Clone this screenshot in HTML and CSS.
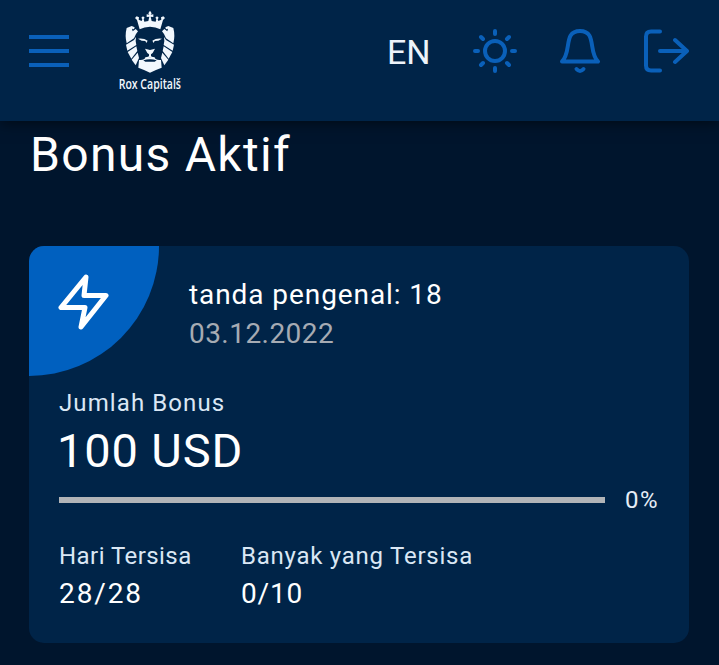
FILE: index.html
```html
<!DOCTYPE html>
<html lang="id">
<head>
<meta charset="utf-8">
<title>Bonus Aktif</title>
<link rel="stylesheet" href="styles.css">
</head>
<body>
<header class="topbar">
  <div class="menu"><span></span><span></span><span></span></div>
  <svg class="logo" viewBox="51 15 198 276">
    <g fill="#f1f7fd">
      <path d="M150 32l5 8-3 4 8-1v8l-8-1 3 13 12 2 2-8-3-4 5-4 5 4-3 5 2 5 9-4-1-7 7-3 5 5-6 6-8 28q-14-8-31-8t-31 8l-8-28-6-6 5-5 7 3-1 7 9 4 2-5-3-5 5-4 5 4-3 4 2 8 12-2 3-13-8 1v-8l8 1-3-4z"/>
      <g id="mane">
        <path d="M80 84l15-6 9 4-2 6-6-2 2 8 9-7 7 7-6 8-6 13-22 15q-6-23 0-46z"/>
        <path d="M102 120l6-9-1 12 2 12-27 17-4-18z"/>
        <path d="M109 139l3 14-18 23-11-20z"/>
        <path d="M113 158l4 16-10 22-12-17z"/>
      </g>
      <use href="#mane" transform="matrix(-1 0 0 1 300 0)"/>
      <path d="M117 180q16 2 20-8h26q4 10 20 8l2 23q-14 5-35 15-21-10-35-15z"/>
      <path d="M114 116q18-2 29 6l-4 7-3-6-11-1zM186 116q-18-2-29 6l4 7 3-6 11-1z"/>
      <path d="M135 146l15 4 15-4-7 13-5 4v6l13 5-4 5-12-7-12 7-4-5 13-5v-6l-5-4z"/>
    </g>
    <path fill="#002448" d="M130 181q20-7 40 0l-6 4h-28z"/>
    <text class="logo-name" x="56" y="266" textLength="187" lengthAdjust="spacingAndGlyphs">Rox Capitalš</text>
  </svg>
  <span class="lang">EN</span>
  <svg class="icon sun" viewBox="0 0 46 46"><circle cx="23" cy="23" r="10"/><path d="M23 3v3M23 40v3M3 23h3M40 23h3M9 9l2 2M35 35l2 2M37 9l-2 2M11 35l-2 2"/></svg>
  <svg class="icon bell" viewBox="0 0 46 46"><path d="M5 33.500C15 24 6 3 23 3s8 21 18 30.500zM19.500 41q3.500 4 7 0"/></svg>
  <svg class="icon exit" viewBox="0 0 46 46"><path d="M17 3.500H8q-5 0-5 5v29q0 5 5 5h9M17 23h27M32 12l12 11-12 11"/></svg>
</header>
<main>
  <h1>Bonus Aktif</h1>
  <section class="card">
    <div class="card-head">
      <div class="corner"><svg viewBox="0 0 52 56"><path d="M28 3L3 33.500h24l-4 19.500 25-31.500H26z"/></svg></div>
      <div class="ident"><span class="title">tanda pengenal: 18</span><span class="date">03.12.2022</span></div>
    </div>
    <div class="card-body">
      <div class="label l1">Jumlah Bonus</div>
      <div class="amount">100 USD</div>
      <div class="progress"><div class="track"></div><span class="percent">0%</span></div>
      <div class="stats">
        <div><div class="label l2">Hari Tersisa</div><div class="value v1">28/28</div></div>
        <div><div class="label l3">Banyak yang Tersisa</div><div class="value v2">0/10</div></div>
      </div>
    </div>
  </section>
</main>
</body>
</html>
```
FILE: styles.css
```css
* { box-sizing: border-box; }
body { margin: 0; height: 665px; overflow: hidden; background: #00152d; color: #fff; font-family: Roboto, "Liberation Sans", sans-serif; white-space: nowrap; }
.topbar { position: relative; display: flex; align-items: center; height: 121px; padding: 0 30px 19px 29px; background: #002448; box-shadow: 0 2px 14px rgba(0,0,0,.55); }
.menu { display: grid; gap: 10px; width: 40px; margin-right: 48px; }
.menu span { height: 4px; background: #0a60b9; }
.logo { width: 66px; height: 92px; overflow: visible; }
.logo-name { font: 600 41px "Open Sans", sans-serif; fill: #f1f7fd; }
.lang { margin: 2px 0 0 auto; width: 44px; font-size: 34px; line-height: 40px; color: #edf3fa; }
.icon { flex: none; width: 46px; height: 46px; fill: none; stroke: #0a60b9; stroke-width: 4; stroke-linecap: round; stroke-linejoin: round; }
.sun { margin-left: 41px; }
.bell { margin-left: 39px; }
.exit { margin-left: 40px; }
main { padding: 5px 30px 0 29px; }
h1 { margin: 0; padding-left: 1px; font-size: 48px; line-height: 58px; font-weight: 400; letter-spacing: 1.3px; }
.card { height: 397px; margin-top: 62px; overflow: hidden; border-radius: 15px; background: #002448; }
.card-head { display: flex; }
.corner { width: 130px; height: 130px; padding: 28px 0 0 29px; background: #0060bf; border-bottom-right-radius: 130px; }
.corner svg { width: 52px; height: 56px; fill: none; stroke: #fff; stroke-width: 5; stroke-linejoin: round; }
.ident { display: grid; align-content: start; padding: 29px 0 0 30px; font-size: 28px; line-height: 39px; }
.title { letter-spacing: .92px; }
.date { color: #a6abb3; letter-spacing: .45px; }
.card-body { padding: 12px 30px 0; }
.label { font-size: 24px; line-height: 30px; color: #dae7f4; letter-spacing: .45px; }
.l1 { letter-spacing: 1.1px; }
.l3 { letter-spacing: .75px; }
.amount { margin: 5px 0 0 -2px; font-size: 47px; line-height: 56px; letter-spacing: .85px; }
.progress { display: flex; align-items: center; height: 30px; margin-top: 6px; gap: 20px; }
.track { width: 546px; height: 6px; background: #b1b4b7; }
.percent { font-size: 24px; color: #e5edf6; letter-spacing: 1.5px; }
.stats { display: flex; margin-top: 26px; }
.stats > div:first-child { width: 182px; }
.value { margin-top: 5px; font-size: 28px; line-height: 36px; }
.v1 { letter-spacing: 1.9px; }
.v2 { letter-spacing: .8px; }
```
